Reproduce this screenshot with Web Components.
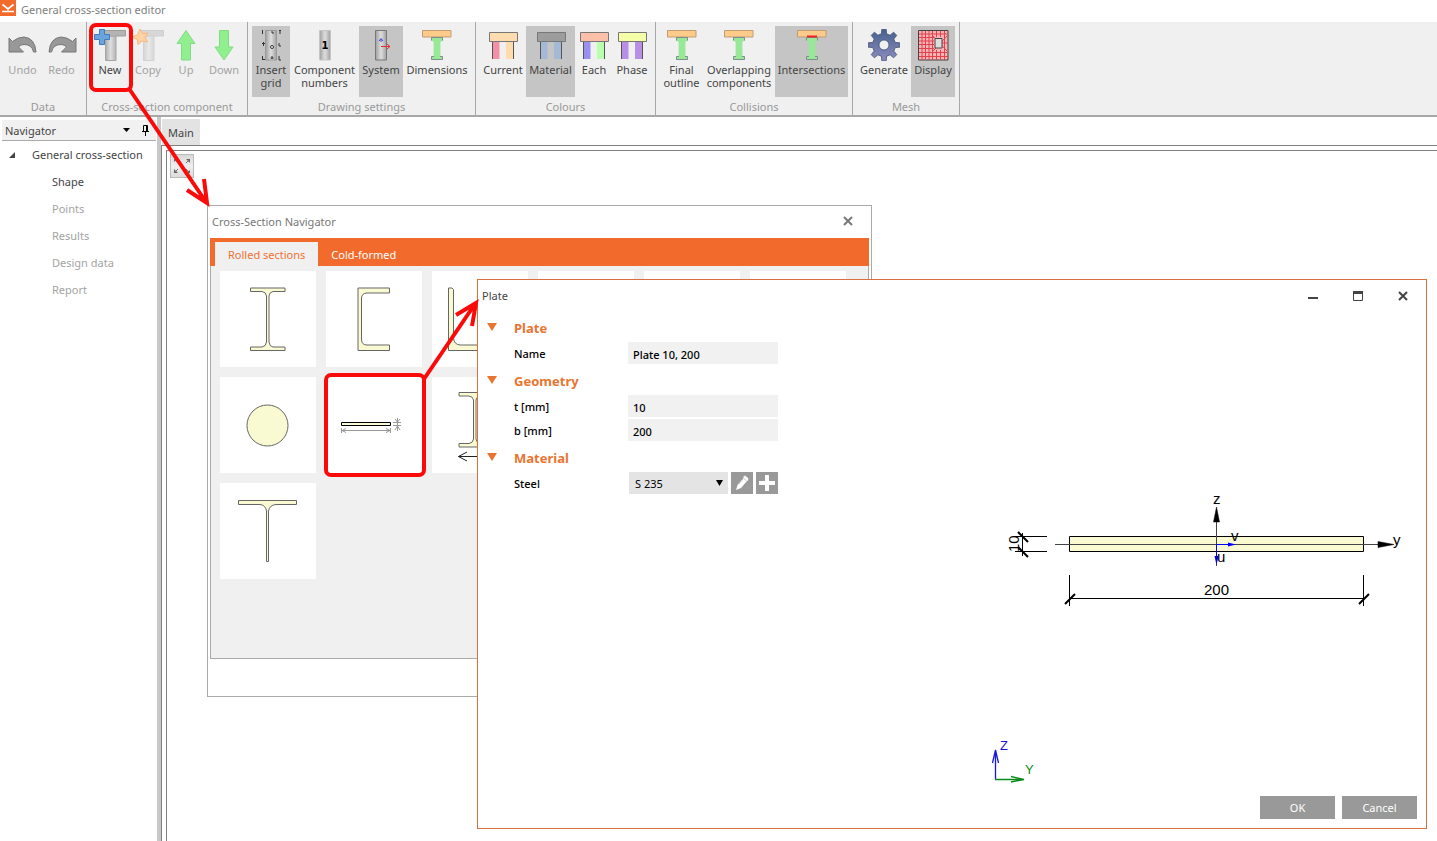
<!DOCTYPE html>
<html lang="en">
<head>
<meta charset="utf-8">
<title>General cross-section editor</title>
<style>
  html, body { margin: 0; height: 100%; background: #fff; overflow: hidden; }
  body { font: 11px/13px "Noto Sans", "Open Sans", sans-serif; color: #444; }
</style>
</head>
<body>
<editor-app>
  <title-bar slot="title">General cross-section editor</title-bar>
  <ribbon-bar slot="ribbon">
    <ribbon-group label="Data">
      <ribbon-button icon="undo" off style="--w:37px">Undo</ribbon-button>
      <ribbon-button icon="redo" off style="--w:41px">Redo</ribbon-button>
    </ribbon-group>
    <ribbon-group label="Cross-section component">
      <ribbon-button icon="new">New</ribbon-button>
      <ribbon-button icon="copy" off>Copy</ribbon-button>
      <ribbon-button icon="up" off>Up</ribbon-button>
      <ribbon-button icon="down" off>Down</ribbon-button>
    </ribbon-group>
    <ribbon-group label="Drawing settings">
      <ribbon-button icon="grid" active>Insert<br>grid</ribbon-button>
      <ribbon-button icon="number" style="--w:69px">Component<br>numbers</ribbon-button>
      <ribbon-button icon="system" active style="--w:44px">System</ribbon-button>
      <ribbon-button icon="beam" style="--w:68px">Dimensions</ribbon-button>
    </ribbon-group>
    <ribbon-group label="Colours">
      <ribbon-button icon="current" style="--w:46px">Current</ribbon-button>
      <ribbon-button icon="material" active style="--w:49px">Material</ribbon-button>
      <ribbon-button icon="each">Each</ribbon-button>
      <ribbon-button icon="phase">Phase</ribbon-button>
    </ribbon-group>
    <ribbon-group label="Collisions">
      <ribbon-button icon="beam" style="--w:43px">Final<br>outline</ribbon-button>
      <ribbon-button icon="beam" style="--w:72px">Overlapping<br>components</ribbon-button>
      <ribbon-button icon="beamred" active style="--w:73px">Intersections</ribbon-button>
    </ribbon-group>
    <ribbon-group label="Mesh">
      <ribbon-button icon="gear" style="--w:54px">Generate</ribbon-button>
      <ribbon-button icon="mesh" active style="--w:44px">Display</ribbon-button>
    </ribbon-group>
  </ribbon-bar>
  <nav-panel slot="nav"></nav-panel>
  <work-area slot="work"></work-area>
  <section-dialog slot="over"></section-dialog>
  <plate-dialog slot="over"></plate-dialog>
  <callout-layer slot="over"></callout-layer>
</editor-app>

<script>
const define = (name, html, setup) => {
  const template = document.createElement('template');
  template.innerHTML = html;
  customElements.define(name, class extends HTMLElement {
    constructor() {
      super();
      this.attachShadow({ mode: 'open' }).append(template.content.cloneNode(true));
    }
    connectedCallback() { if (setup) setup(this, this.shadowRoot); }
  });
};

const metal = `<defs><linearGradient id="m" x1="0" x2="1"><stop offset="0" stop-color="#a0a0a0"/><stop offset=".5" stop-color="#dedede"/><stop offset="1" stop-color="#a0a0a0"/></linearGradient></defs>`;
const tee = `<defs><linearGradient id="t" gradientUnits="userSpaceOnUse" x1="11" x2="22" y1="0" y2="0"><stop offset="0" stop-color="#a8a8a8"/><stop offset=".5" stop-color="#dedede"/><stop offset="1" stop-color="#b4b4b4"/></linearGradient></defs><path d="M11.500 7H22V31.500H11.500Z" fill="url(#t)" stroke="#a5a5a5"/><path d="M8 1.500H31.500V7H8Z" fill="#b4b4b4" stroke="#9c9c9c"/><path d="M12 7H21.500" stroke="#b4b4b4"/>`;
const swoosh = `<path d="M2 9L5.500 12.500Q11 8 17 8Q28 9 29 23L26.500 23Q25 15.500 17 15.500Q13.500 15.500 11.500 18L16.500 23H2Z" fill="#989898" stroke="#777"/>`;
const beam = `<path d="M1.500 1.500H30V8H1.500Z" fill="#ffcb8a" stroke="#c09c74"/><path d="M10.500 8.500H21.500V11.500L19 12.500V27L21.500 28V30.500H10.500V28L13 27V12.500L10.500 11.500Z" fill="#98e898" stroke="#98e898" stroke-width=".8"/><path d="M10.500 11.500V8.500H21.500V11.500M13 27.500H10.500V30.500H21.500V27.500H19" fill="none" stroke="#778" stroke-width=".8"/>`;
const portal = (top, a, b) => `<path d="M5 13H12.500V30H5Z" fill="${a}"/><path d="M19 13H26.500V30H19Z" fill="${b}"/><path d="M5.500 12V30M26.500 12V30" stroke="#555"/><path d="M2.500 3.500H30.500V12.500H2.500Z" fill="${top}" stroke="#777"/>`;
const gearPath = (() => {
  const p = [];
  for (let i = 0; i < 8; i++) {
    for (const [r, d] of [[11.5, -13], [16, -8], [16, 8], [11.5, 13]]) {
      const a = (i * 45 + d) * Math.PI / 180;
      p.push((16 + r * Math.sin(a)).toFixed(1) + ' ' + (16 - r * Math.cos(a)).toFixed(1));
    }
  }
  return 'M' + p.join('L') + 'ZM21 16A5 5 0 1 0 11 16A5 5 0 1 0 21 16Z';
})();
const icons = {
  undo: swoosh,
  redo: `<g transform="translate(32 0) scale(-1 1)">${swoosh}</g>`,
  new: tee + `<path d="M5.500 .500H10.500V5.500H15.500V10.500H10.500V15.500H5.500V10.500H.500V5.500H5.500Z" fill="#6ba3dc" stroke="#3f7cc0"/>`,
  copy: `<g opacity=".4">${tee}</g><path d="M8 0L10.500 4.500L16 4L13 8.500L15.500 13L10 12L6 15.500L5.500 10.500L0 8L5.500 6Z" fill="#ffd3a4" stroke="#f9b67c"/>`,
  up: `<path d="M16 1.500L25 14.500H20.500V31H11.500V14.500H7Z" fill="#90f090" stroke="#84da84"/>`,
  down: `<path d="M16 31L25 18H20.500V1.500H11.500V18H7Z" fill="#90f090" stroke="#84da84"/>`,
  grid: metal + `<path d="M10.500 1.500H21.500V31H10.500Z" fill="url(#m)" stroke="#999"/><path d="M7.500 1v4M7 14.500h3M8.500 13v4M7.500 27v4M8 30.500h2M16 3h2v2M17 27v3M24 1.500h2M25 1v4M24 14v3h2M24 27v4h2M15.500 29h3" fill="none" stroke="#333"/><circle cx="17" cy="18" r="1.500" fill="#fff" stroke="#333"/>`,
  number: metal + `<path d="M10.500 1.500H21.500V31H10.500Z" fill="url(#m)" stroke="#c5c5c5"/><text x="16" y="20" text-anchor="middle" font-family="DejaVu Sans" font-weight="bold" font-size="10">1</text>`,
  system: metal + `<path d="M10.500 1.500H21.500V31H10.500Z" fill="url(#m)" stroke="#777"/><path d="M16 13V10M14 12L16 9.500L18 12" fill="none" stroke="#4545e8"/><path d="M16 17.500H25M22 15L25 17.500L22 20" fill="none" stroke="#e03030"/>`,
  beam,
  beamred: beam + `<path d="M11 7.500H21" stroke="#e22" stroke-width="2"/>`,
  current: portal('#ffdcb0', '#f48fa8', '#ffdcae'),
  material: portal('#9d9d9d', '#a3b9d6', '#a3b9d6'),
  each: portal('#fcc0aa', '#9a90f0', '#b8ffae'),
  phase: portal('#f5ffa8', '#b98fe6', '#b98fe6'),
  gear: `<defs><linearGradient id="g" x2="0" y2="1"><stop offset="0" stop-color="#44618f"/><stop offset="1" stop-color="#8e8cc0"/></linearGradient></defs><path d="${gearPath}" fill="url(#g)" fill-rule="evenodd" stroke="#42506e" stroke-width=".8"/>`,
  mesh: `<path d="M1.500 1.500H31V31H1.500Z" fill="#f8b4b4" stroke="#444"/><path d="M5 2V31M8.500 2V31M12 2V31M15.500 2V31M19.500 2V8M23.500 2V8M27.500 2V31M19.500 21V31M23.500 21V31M2 5H31M2 8.500H17M2 12H17M2 15.500H17M2 19.500H17M2 23.500H31M2 27.500H31M16 7L30 22M30 7L16 22M25 14H31" stroke="#e2404c" fill="none"/><path d="M18 9.500H25V19H18Z" fill="#ddd" stroke="#444"/>`
};

define('editor-app', `
  <style>
    :host { display: grid; position: relative; height: 100vh; grid-template: 22px 95px minmax(0, 1fr) / 157px minmax(0, 1fr); }
    slot[name=title]::slotted(*), slot[name=ribbon]::slotted(*) { grid-column: 1 / -1; }
  </style>
  <slot name="title"></slot><slot name="ribbon"></slot><slot name="nav"></slot><slot name="work"></slot><slot name="over"></slot>`);

define('title-bar', `
  <style>
    :host { display: flex; align-items: flex-start; gap: 5px; color: #808080; line-height: 19px; }
    svg { width: 16px; height: 16px; }
  </style>
  <svg viewBox="0 0 16 16" aria-hidden="true"><path fill="#f26b2c" d="M0 0H16V16H0Z"/><path d="M2.500 4.500L8 9L13.500 4.500M2 11.500H14" fill="none" stroke="#fff" stroke-width="1.700"/><path d="M8 8V11" stroke="#fff"/></svg>
  <span><slot></slot></span>`);

define('ribbon-bar', `
  <style>
    :host { display: flex; box-sizing: border-box; background: #f0f0f0; border-bottom: 2px solid #a8a8a8; }
  </style><slot></slot>`);

define('ribbon-group', `
  <style>
    :host { display: flex; flex-direction: column; justify-content: space-between; border-right: 1px solid #a8a8a8; padding: 4px 4px 2px; text-align: center; }
    .row { display: flex; }
    .label { color: #999; }
  </style>
  <div class="row"><slot></slot></div><div class="label"></div>`,
  (el, root) => { root.querySelector('.label').textContent = el.getAttribute('label'); });

define('ribbon-button', `
  <style>
    :host { display: block; width: var(--w, 38px); height: 71px; }
    button { all: unset; display: flex; flex-direction: column; align-items: center; gap: 2px; box-sizing: border-box; width: 100%; height: 100%; padding-top: 3px; white-space: nowrap; text-align: center; color: #444; }
    svg { width: 32px; height: 32px; flex: none; }
    :host([active]) button { background: #c5c5c5; }
    :host([off]) button { color: #a3a3a3; }
  </style>
  <button type="button"><svg viewBox="0 0 32 32" aria-hidden="true"></svg><span><slot></slot></span></button>`,
  (el, root) => {
    root.querySelector('svg').innerHTML = icons[el.getAttribute('icon')];
    root.querySelector('button').disabled = el.hasAttribute('off');
  });

define('nav-panel', `
  <style>
    :host { display: block; padding: 3px 1px 0 2px; }
    header { display: flex; align-items: center; gap: 10px; height: 20px; padding: 0 6px 0 3px; background: #f1f1f1; border-bottom: 1px solid #aaa; }
    header span { flex: 1; }
    ul { list-style: none; margin: 0; padding: 0; line-height: 27px; }
    .root { display: flex; align-items: center; gap: 16px; padding-left: 6px; }
    ul ul { padding-left: 50px; }
    a { color: inherit; text-decoration: none; }
    .off { color: #a3a3a3; }
  </style>
  <header><span>Navigator</span>
    <svg width="9" height="5" aria-hidden="true"><path d="M1 0H8L4.500 4Z" fill="#000"/></svg>
    <svg width="9" height="11" viewBox="0 0 9 11" aria-hidden="true"><path d="M2.500 6V.500H6.500V6M5.500 1V6M1 6.500H8M4.500 7V11" fill="none" stroke="#000"/></svg>
  </header>
  <ul><li><div class="root"><svg width="8" height="8" aria-hidden="true"><path d="M7 1V7H1Z" fill="#444"/></svg><a href="#general">General cross-section</a></div>
    <ul><li><a href="#shape">Shape</a></li><li class="off">Points</li><li class="off">Results</li><li class="off">Design data</li><li class="off">Report</li></ul>
  </li></ul>`);

define('work-area', `
  <style>
    :host { display: flex; border-left: 4px solid #c8c8c8; padding-top: 2px; flex-direction: column; }
    .tab { all: unset; align-self: flex-start; background: #e3e3e3; margin-left: 1px; padding: 0 6px; height: 26px; line-height: 28px; }
    .frame { flex: 1; display: flex; border: solid #808080; border-width: 1px 0 0 1px; padding: 4px 0 0 4px; }
    .canvas { flex: 1; border: solid #808080; border-width: 1px 0 0 1px; padding: 3px; }
    .zoom { all: unset; display: flex; width: 22px; height: 22px; border: 1px solid #bbb; background: linear-gradient(#d8d8d8, #efefef, #dcdcdc); }
  </style>
  <button class="tab" type="button">Main</button>
  <div class="frame"><div class="canvas"><button class="zoom" type="button" aria-label="Zoom to fit"><svg width="22" height="22" viewBox="0 0 22 22" aria-hidden="true"><path d="M15 4H19V8ZM7 18H3V14ZM3 4h3l-3 3ZM19 18h-3l3-3Z" fill="#666"/><path d="M15 8L18 5M7 14L4 17M4 5l3 3M18 17l-3-3" stroke="#777"/></svg></button></div></div>`);

const cross = `<path d="M1 1L9 9M9 1L1 9" stroke="currentColor" stroke-width="2" fill="none"/>`;
const tiles = [
  ['I section', `<path d="M30.500 17H65V20.500H53Q49.500 21 49 25V71Q49.500 75.500 53 76H65V79.500H30.500V76H42Q46 75.500 46.500 71V25Q46 21 42 20.500H30.500Z"/>`],
  ['Channel', `<path d="M32 17H63.500V22H41Q36 22 35.500 27V69Q36 74 41 74H63.500V79.500H32Z"/>`],
  ['Angle', `<path d="M16.500 17H20L21.500 18.500V67Q22 73.500 28 74H74V79.500H16.500Z"/>`],
  ['Rectangular tube', ''], ['Circular tube', ''], ['Square', ''],
  ['Round bar', `<circle cx="47.500" cy="48.500" r="20.500"/>`],
  ['Plate', `<path d="M15.500 45.500H64.500V48.500H15.500Z" stroke="#000"/><path d="M15.500 51V56M64.500 51V56M16 53.500H64M20 51.500L16 53.500L20 55.500M60 51.500L64 53.500L60 55.500M67 45.500H75M67 48.500H75M71.500 41V54M69 42L71.500 45L74 42M69 53L71.500 49L74 53" fill="none" stroke="#999"/>`],
  ['Double section', `<path d="M27 15.500H64V19H48Q44.500 19.500 44 23V62Q44.500 66 48 66.500H64V70H27V66.500H37Q41 66 41.500 62V23Q41 19.500 37 19H27Z"/><path d="M26.500 79.500H70M35 75L26.500 79.500L35 84" fill="none" stroke="#222"/>`],
  ['Tube', ''], ['Box', ''], ['Cross', ''],
  ['T section', `<path d="M18.500 17.500H76.500V21.500H56Q49.500 22 48.500 28V78.500H46.500V28Q45.500 22 40 21.500H18.500Z"/>`]
];

define('section-dialog', `
  <style>
    :host { position: absolute; left: 207px; top: 205px; box-sizing: border-box; width: 665px; height: 492px; border: 1px solid #aaa; background: #fff; padding: 0 2px; display: flex; flex-direction: column; }
    header { display: flex; align-items: center; justify-content: space-between; box-sizing: border-box; height: 32px; padding: 0 16px 2px 2px; color: #777; }
    button { all: unset; }
    .x { display: flex; color: #777; }
    nav { display: flex; align-items: flex-end; background: #f26b2c; height: 28px; padding-left: 5px; }
    nav button { height: 24px; line-height: 25px; padding: 0 13px; color: #fff; }
    nav .on { background: #f0f0f0; color: #f07030; }
    .body { display: grid; grid-template-columns: repeat(6, 96px); grid-auto-rows: 96px; gap: 10px; height: 387px; padding: 5px 9px 0; background: #f0f0f0; border: 1px solid #aaa; border-top: 0; }
    .body button { background: #fff; }
    .body svg { display: block; width: 96px; height: 96px; fill: #fafad2; stroke: #666; stroke-width: 1; }
  </style>
  <header><span>Cross-Section Navigator</span><button class="x" type="button" aria-label="Close"><svg width="10" height="10" viewBox="0 0 10 10">${cross}</svg></button></header>
  <nav><button class="on" type="button">Rolled sections</button><button type="button">Cold-formed</button></nav>
  <div class="body">${tiles.map(([name, art]) => `<button type="button" aria-label="${name}"><svg viewBox="0 0 96 96" aria-hidden="true">${art}</svg></button>`).join('')}</div>`);

define('prop-heading', `
  <style>
    :host { display: flex; align-items: center; gap: 17px; box-sizing: border-box; height: 29px; padding-top: 2px; color: #e87430; }
    h2 { margin: 0; font-size: 13px; line-height: 27px; font-weight: 700; }
    svg { margin-bottom: 4px; }
  </style>
  <svg width="10" height="8" aria-hidden="true"><path d="M0 0H10L5 8Z" fill="#e87430"/></svg><h2><slot></slot></h2>`);

define('prop-field', `
  <style>
    :host { display: grid; grid-template-columns: 114px 150px; height: 24px; padding-left: 27px; color: #000; font-weight: 500; line-height: 24px; }
    input, select { all: unset; box-sizing: border-box; height: 22px; line-height: 20px; background: #f1f1f1; padding: 2px 5px 0; width: 150px; }
    .pick { display: grid; grid-template-columns: 100px 22px 22px; gap: 3px; }
    .combo { display: flex; align-items: center; justify-content: flex-end; background: #e4e4e4; height: 22px; padding-right: 5px; margin-left: 1px; }
    .combo select { flex: 1; background: transparent; width: 0; font-weight: 400; padding: 2px 6px 0; }
    button { all: unset; display: block; background: #999; width: 22px; height: 22px; }
    svg { display: block; flex: none; }
  </style>
  <label for="f"></label>`,
  (el, root) => {
    root.querySelector('label').textContent = el.getAttribute('label');
    if (root.getElementById('f')) return;
    const value = el.getAttribute('value');
    root.querySelector('label').insertAdjacentHTML('afterend', el.hasAttribute('choice')
      ? `<div class="pick"><div class="combo"><select id="f"><option>${value}</option></select><svg width="7" height="6" aria-hidden="true"><path d="M0 0H7L3.500 6Z"/></svg></div>
         <button type="button" aria-label="Edit material"><svg width="22" height="22" viewBox="0 0 22 22"><path d="M5 18L6.500 13L13 5.500L16.500 8.500L10 16Z" fill="#fff"/><path d="M12 5L14 3.500L17.500 6.500L16.500 9Z" fill="#fff"/><path d="M12.500 6.500L15.500 9M8 12L12 7" stroke="#bbb" stroke-width=".7"/></svg></button>
         <button type="button" aria-label="Add material"><svg width="22" height="22"><path d="M11 3V19M3 11H19" stroke="#fff" stroke-width="4"/></svg></button></div>`
      : `<input id="f" type="text" value="${value}">`);
  });

define('plate-drawing', `
  <style>
    :host { display: block; }
    svg { display: block; font-family: "Liberation Sans", sans-serif; font-size: 15px; }
  </style>
  <svg width="432" height="304" viewBox="985 485 432 304" role="img" aria-label="Plate cross-section, 10 by 200">
    <g fill="none" stroke="#222">
      <path d="M1069.500 536.500H1363.500V551.500H1069.500Z" fill="#fafad2" stroke="#000"/>
      <path d="M1055 544.500H1380M1216.500 566V520" stroke="#444"/>
      <path d="M1378 541.500L1394 544.500L1378 547.500ZM1213.500 522L1216.500 507L1219.500 522Z" fill="#000" stroke="#000" stroke-width=".5"/>
      <path d="M1216.500 544.500H1230M1216.500 544.500V557" stroke="#00f"/>
      <path d="M1228 542.500L1236 544.500L1228 546.500ZM1214.500 556L1216.500 565L1218.500 556Z" fill="#00f" stroke="none"/>
      <path d="M1015 536.500H1047M1015 551.500H1047M1022.500 533V556M1069.500 575V606M1363.500 575V606M1069 598.500H1364" stroke="#000"/>
      <path d="M1018 532L1028 542M1018 547L1028 557M1065 604L1075 594M1359 604L1369 594" stroke="#000" stroke-width="2"/>
      <path d="M995.500 779V750M992.500 763L995.500 750L998.500 763" stroke="#1818d8" stroke-width="1.300"/>
      <path d="M995 779.500H1024M1011 776.500L1024 779.500L1011 782" stroke="#0a8a1a" stroke-width="1.300"/>
    </g>
    <text x="1213" y="504">z</text><text x="1393" y="545">y</text><text x="1231" y="541">v</text><text x="1217" y="562">u</text>
    <text x="1204" y="595">200</text><text transform="translate(1019 552) rotate(-90)">10</text>
    <text x="1000" y="750" font-size="13" fill="#1818d8">Z</text><text x="1025" y="774" font-size="13" fill="#0a8a1a">Y</text>
  </svg>`);

define('plate-dialog', `
  <style>
    :host { position: absolute; left: 477px; top: 279px; box-sizing: border-box; width: 950px; height: 550px; border: 1px solid #d87040; background: #fff; display: flex; flex-direction: column; }
    header { display: flex; align-items: center; box-sizing: border-box; height: 33px; padding: 0 18px 2px 4px; gap: 35px; }
    header span { flex: 1; }
    button { all: unset; }
    header button { display: flex; }
    main { flex: 1; display: flex; justify-content: space-between; padding: 0 9px 0 9px; }
    plate-drawing { align-self: flex-end; }
    footer { display: flex; justify-content: flex-end; gap: 7px; padding: 7px 9px 9px; }
    footer button { width: 75px; line-height: 23px; background: #999; color: #fff; text-align: center; }
  </style>
  <header><span>Plate</span>
    <button type="button" aria-label="Minimise"><svg width="10" height="10"><path d="M0 6H10V8H0Z" fill="#444"/></svg></button>
    <button type="button" aria-label="Maximise"><svg width="10" height="10"><path d="M.500 1H9.500V9.500H.500Z" fill="none" stroke="#444"/><path d="M0 0H10V3H0Z" fill="#444"/></svg></button>
    <button type="button" aria-label="Close"><svg width="10" height="10" viewBox="0 0 10 10">${cross}</svg></button>
  </header>
  <main><div>
    <prop-heading>Plate</prop-heading>
    <prop-field label="Name" value="Plate 10, 200"></prop-field>
    <prop-heading>Geometry</prop-heading>
    <prop-field label="t [mm]" value="10"></prop-field>
    <prop-field label="b [mm]" value="200"></prop-field>
    <prop-heading>Material</prop-heading>
    <prop-field label="Steel" value="S 235" choice></prop-field>
  </div><plate-drawing></plate-drawing></main>
  <footer><button type="button">OK</button><button type="button">Cancel</button></footer>`);

define('callout-layer', `
  <style>
    :host { position: absolute; left: 0; top: 0; pointer-events: none; }
    svg { display: block; }
  </style>
  <svg width="500" height="500" fill="none" stroke="#fb0a0a" stroke-width="4" aria-hidden="true">
    <rect x="91" y="25" width="40" height="65" rx="5"/>
    <path d="M130 90L206 202M204 179L207 203L187 190"/>
    <rect x="326" y="375" width="98" height="100" rx="5"/>
    <path d="M424 379L475 304M456 315L476 303L472 326"/>
  </svg>`);
</script>
</body>
</html>
